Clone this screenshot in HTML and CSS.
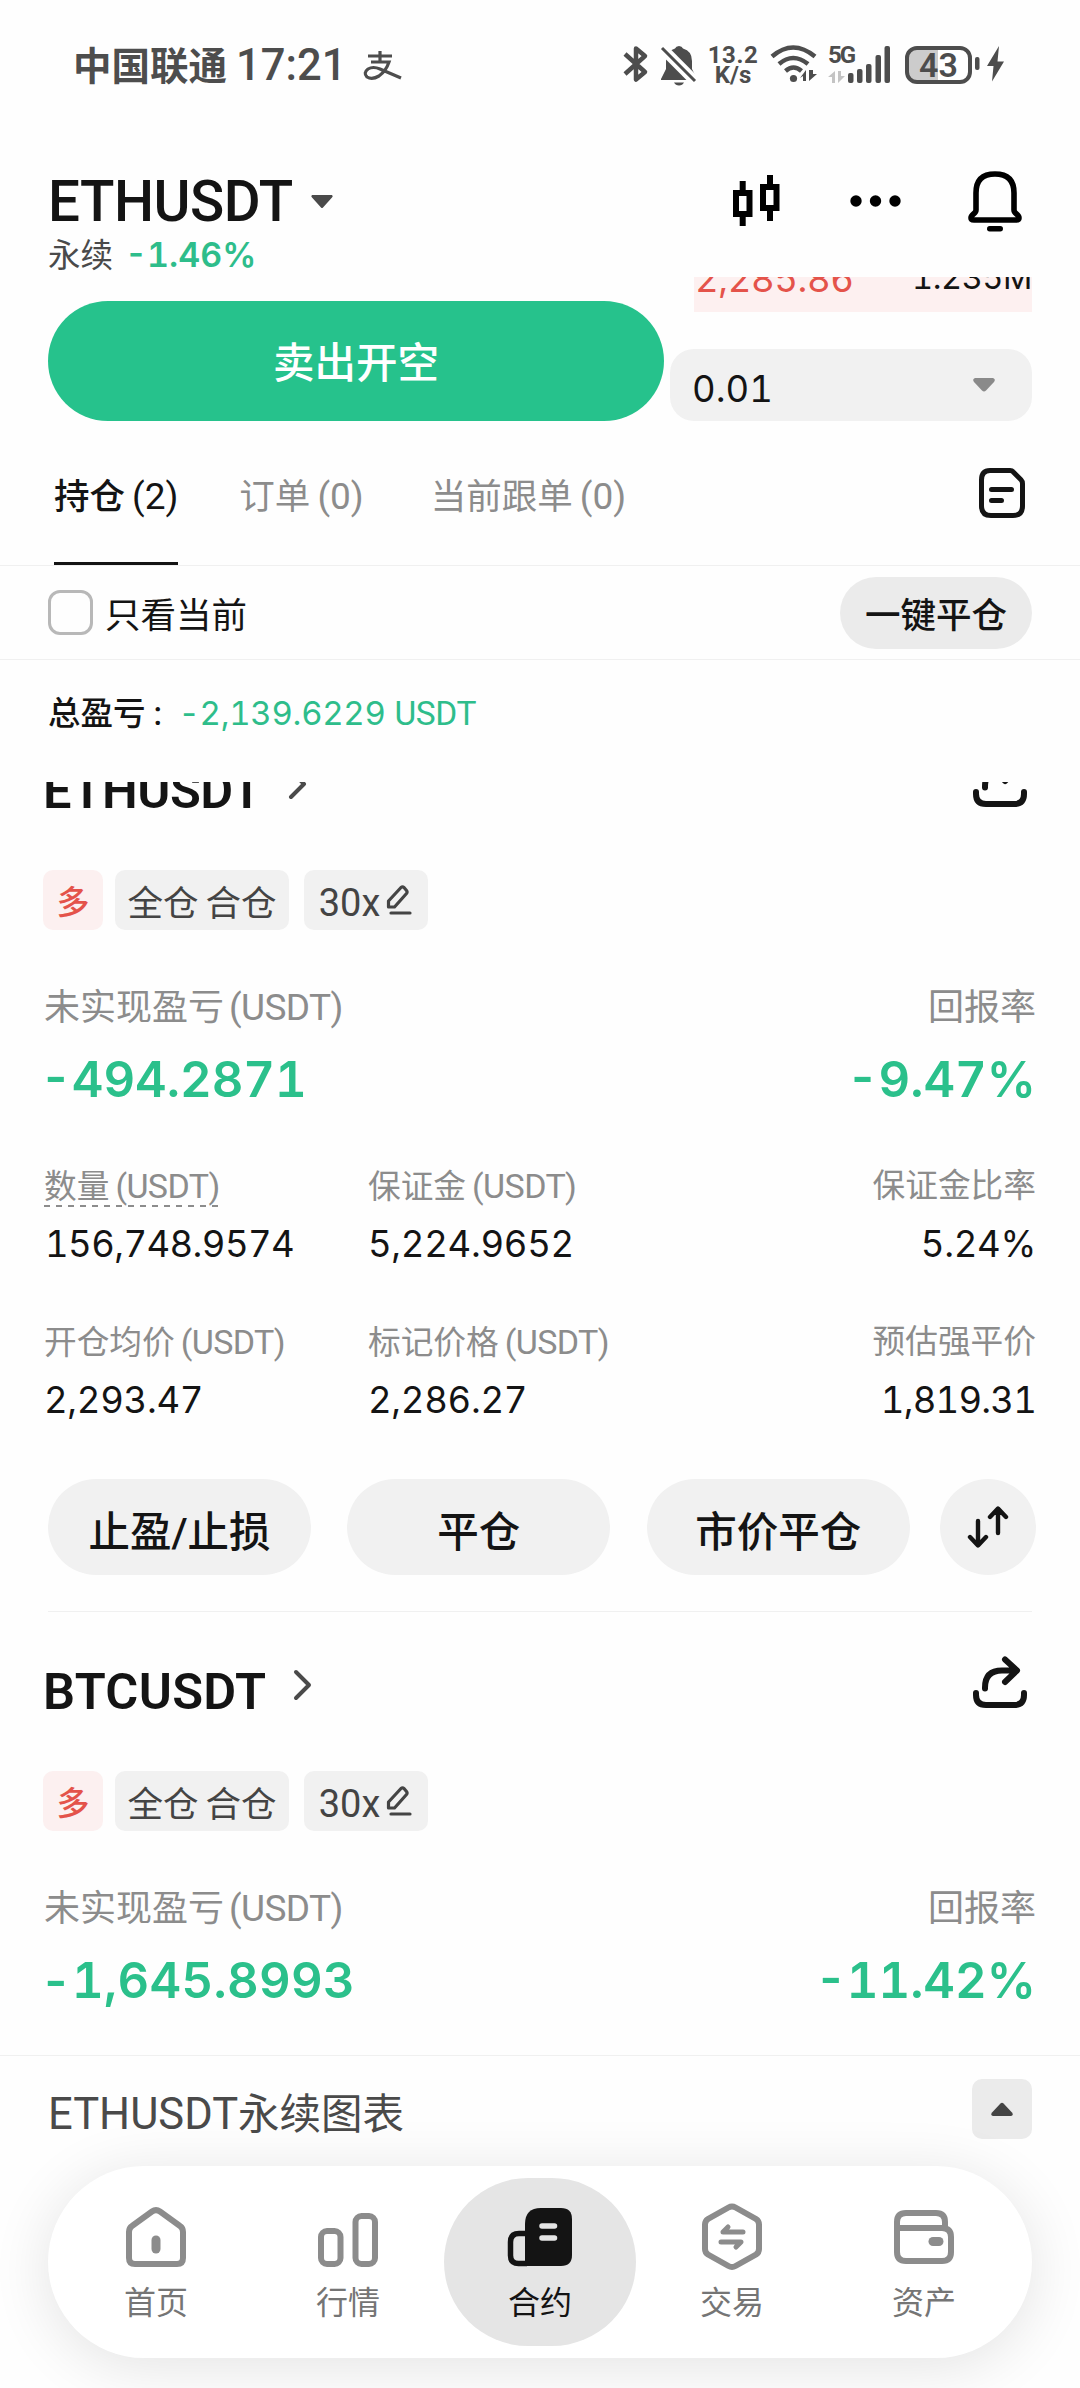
FILE: index.html
```html
<!DOCTYPE html>
<html lang="zh-CN">
<head>
<meta charset="utf-8">
<title>ETHUSDT 永续</title>
<link rel="stylesheet" href="styles.css">
</head>
<body>
<svg class="defs" width="0" height="0">
  <symbol id="share" viewBox="0 0 60 60"><g fill="none" stroke="#141414" stroke-width="6" stroke-linecap="round" stroke-linejoin="round"><path d="M6 41v2q0 10 10 10h28q10 0 10-10v-2"/><path d="M15 36.500v-1q0-17 17-17h14M35 7.500l12 11l-12 11.500"/></g></symbol>
  <symbol id="pencil" viewBox="0 0 28 32"><g fill="none" stroke="#444" stroke-width="3.200" stroke-linejoin="round" stroke-linecap="round"><path d="M3.500 23v-6L16 3.500q1.500-1.200 3 0l2.500 3q1.200 1.500 0 3L9.500 23z"/><path d="M6 29h19"/></g></symbol>
  <symbol id="chevron" viewBox="0 0 20 32"><path d="M3 3l13 13L3 29" fill="none" stroke="#4a4a4a" stroke-width="4" stroke-linecap="round" stroke-linejoin="round"/></symbol>
</svg>

<div class="status">
  <span class="carrier">中国联通</span><span class="clock">17:21</span>
  <svg class="pay" width="40" height="32" viewBox="0 0 40 32"><g fill="none" stroke="#4d4d4d" stroke-width="3.200"><path d="M6 6h24M18 1v11M9 12h18q-3 9-10 14q-7 4-12 1q-4-4 1-8q5-3 12 0l21 9"/></g></svg>
  <div class="sys">
    <svg width="28" height="40" viewBox="0 0 28 40"><path d="M2 10l20 18-9 7.500V4.500l9 7.500L2 30" fill="none" stroke="#4d4d4d" stroke-width="4.500" stroke-linejoin="round"/></svg>
    <svg class="mute" width="38" height="42" viewBox="0 0 38 42"><path d="M19 2q-3 0-4 2.500Q6 7 6 17v8l-5 10v1h36v-1l-5-10v-8q0-10-9-12.500Q22 2 19 2z" fill="#4d4d4d"/><path d="M14 38.500h10q-1.500 3-5 3t-5-3z" fill="#4d4d4d"/><path d="M-1 5l36 36" stroke="#fff" stroke-width="5"/><path d="M3.500 3.500l33 33" stroke="#fff" stroke-width="7.500"/><path d="M2 4l33 33" stroke="#4d4d4d" stroke-width="3"/></svg>
    <div class="rate"><span class="num">13.2</span><span>K/s</span></div>
    <svg class="wifi" width="48" height="40" viewBox="0 0 48 40"><g fill="none" stroke="#4d4d4d" stroke-width="4.500"><path d="M2 12.500q21-18 43 0"/><path d="M9 20q14-12 29 0"/><path d="M15.500 27q8-7 16 0"/></g><circle cx="23.500" cy="34.500" r="3.600" fill="#4d4d4d"/><path d="M30 34l6-8v11h-3v-5zM39 26v11l8-7h-4v-4z" fill="#4d4d4d"/></svg>
    <div class="cell"><span>5G</span>
      <svg width="64" height="40" viewBox="0 0 64 40"><g fill="#4d4d4d"><rect x="20" y="29" width="5.500" height="10" rx="2"/><rect x="29" y="25" width="5.500" height="14" rx="2"/><rect x="38" y="20" width="5.500" height="19" rx="2"/><rect x="47.500" y="11" width="5.500" height="28" rx="2"/><rect x="56.500" y="2" width="5.500" height="37" rx="2"/></g><path d="M0 33l7-6v12h-3v-6zM10 27v12l7-7h-4v-5z" fill="#c4c4c4"/></svg>
    </div>
    <div class="battery"><span>43</span></div>
    <svg class="nub" width="32" height="40" viewBox="0 0 32 40"><rect x="1" y="13" width="4.500" height="13" rx="2" fill="#4d4d4d"/><path d="M25 2L13 22h6.500L18 37.500L30 17.500h-6.500z" fill="#4d4d4d"/></svg>
  </div>
</div>

<header class="top">
  <div>
    <div class="pair">ETHUSDT<svg width="24" height="16" viewBox="0 0 24 16"><path d="M2 1h20q1.500 1 0 2.500L13 13.500q-1 1-2 0L2 3.500Q.5 2 2 1z" fill="#4a4a4a"/></svg></div>
    <div class="sub">永续<b>-1.46%</b></div>
  </div>
  <div class="tools">
    <svg width="50" height="54" viewBox="0 0 50 54"><g fill="none" stroke="#000" stroke-width="6"><path d="M4 19h13.500v21H4zM31 13h13.500v21H31z"/><path d="M10.700 7v11M10.700 41v11M38 1v11M38 35v12"/></g></svg>
    <svg width="54" height="14" viewBox="0 0 54 14"><circle cx="7" cy="7" r="5.700"/><circle cx="26.500" cy="7" r="5.700"/><circle cx="46" cy="7" r="5.700"/></svg>
    <svg class="bell" width="56" height="64" viewBox="0 0 56 64"><path d="M28 5q19 0 19 19v17q0 2 2.500 4t2.500 4t-3 2H7q-3 0-3-2t2.500-4t2.500-4V24Q9 5 28 5z" fill="none" stroke="#000" stroke-width="5.600"/><rect x="20" y="57" width="16" height="5.500" rx="2.700"/></svg>
  </div>
</header>

<section class="trade">
  <button class="sell">卖出开空</button>
  <div class="book">
    <div class="ask"><span>2,285.86</span><span class="vol">1.235M</span></div>
    <div class="step"><span>0.01</span><svg width="24" height="16" viewBox="0 0 24 16"><path d="M3 1h18q3 1 1 4l-8 8.500q-2 2-4 0L2 5Q0 2 3 1z" fill="#8a8a8a"/></svg></div>
  </div>
</section>

<nav class="tabs">
  <div class="tab on">持仓<i>(2)</i></div>
  <div class="tab">订单<i>(0)</i></div>
  <div class="tab">当前跟单<i>(0)</i></div>
  <svg class="doc" width="48" height="52" viewBox="0 0 48 52"><path d="M12 3.500h20q2 0 3 1.200l8 8q1.500 1.500 1.500 4V39q0 9.500-9.500 9.500H13q-9.500 0-9.500-9.500V13q0-9.500 8.500-9.500z" fill="none" stroke="#141414" stroke-width="5" stroke-linejoin="round"/><path d="M13.500 22.500h20M13.500 33.500h10" stroke="#141414" stroke-width="5" stroke-linecap="round"/></svg>
</nav>

<div class="filter"><span class="check"></span><span class="only">只看当前</span><button class="closeall">一键平仓</button></div>

<div class="total"><span>总盈亏</span><span class="colon">:</span><b>-2,139.6229</b><em>USDT</em></div>

<main class="list">
  <article class="pos first">
    <div class="head"><h2 class="eth">ETHUSDT</h2><svg width="20" height="32"><use href="#chevron"/></svg><svg class="sh" width="60" height="60"><use href="#share"/></svg></div>
    <div class="tags"><span class="tag long">多</span><span class="tag mode">全仓<i>合仓</i></span><span class="tag lev">30x<svg width="28" height="32"><use href="#pencil"/></svg></span></div>
    <div class="row lab big"><span>未实现盈亏<i>(USDT)</i></span><span>回报率</span></div>
    <div class="row pnl"><span>-494.2871</span><span>-9.47%</span></div>
    <div class="grid">
      <div><p class="lab"><u>数量<i>(USDT)</i></u></p><p class="val one">156,748.9574</p></div>
      <div><p class="lab">保证金<i>(USDT)</i></p><p class="val">5,224.9652</p></div>
      <div class="r"><p class="lab">保证金比率</p><p class="val pct">5.24%</p></div>
      <div><p class="lab">开仓均价<i>(USDT)</i></p><p class="val">2,293.47</p></div>
      <div><p class="lab">标记价格<i>(USDT)</i></p><p class="val">2,286.27</p></div>
      <div class="r"><p class="lab">预估强平价</p><p class="val liq">1,819.31</p></div>
    </div>
    <div class="acts"><button>止盈/止损</button><button>平仓</button><button>市价平仓</button>
      <button class="round"><svg width="44" height="44" viewBox="0 0 44 44"><g fill="none" stroke="#141414" stroke-width="4.400" stroke-linecap="round" stroke-linejoin="round"><path d="M12 16v24M4 32l8 8.500l8-8.500M32 28V4M24 12l8-8.500l8 8.500"/></g></svg></button></div>
  </article>
  <article class="pos">
    <div class="head"><h2>BTCUSDT</h2><svg width="20" height="32"><use href="#chevron"/></svg><svg class="sh" width="60" height="60"><use href="#share"/></svg></div>
    <div class="tags"><span class="tag long">多</span><span class="tag mode">全仓<i>合仓</i></span><span class="tag lev">30x<svg width="28" height="32"><use href="#pencil"/></svg></span></div>
    <div class="row lab big"><span>未实现盈亏<i>(USDT)</i></span><span>回报率</span></div>
    <div class="row pnl wide"><span>-1,645.8993</span><span>-11.42%</span></div>
  </article>
</main>

<div class="chart"><span><i>ETHUSDT</i>永续图表</span><button><svg width="24" height="16" viewBox="0 0 24 16"><path d="M3 15h18q3-1 1-3.500l-8.500-9q-1.500-1.500-3 0L2 11.500Q0 14 3 15z" fill="#444"/></svg></button></div>

<nav class="dock">
  <a><svg width="72" height="72" viewBox="0 0 72 72"><path d="M9 31q0-4 3-6L32 10.500q4-2.800 8 0L60 25q3 2 3 6v26q0 6-6 6H15q-6 0-6-6z" fill="none" stroke="#8c8c8c" stroke-width="6"/><rect x="31.500" y="34.500" width="9" height="18" rx="4.500" fill="#8c8c8c"/></svg>首页</a>
  <a><svg width="72" height="72" viewBox="0 0 72 72"><g fill="none" stroke="#8c8c8c" stroke-width="6"><rect x="9" y="30" width="19.500" height="33" rx="6"/><rect x="43.500" y="15" width="19.500" height="48" rx="6"/></g></svg>行情</a>
  <a class="on"><svg width="72" height="72" viewBox="0 0 72 72"><path d="M21 23Q21 7 37 7h20q11 0 11 11v36q0 11-11 11H21z" fill="#141414"/><path d="M23 32.500h-8q-8.500 0-8.500 8.500v13.500q0 8 8 8H23" fill="none" stroke="#141414" stroke-width="5.500"/><path d="M38 25h12.500M38 37h12.500" stroke="#e5e5e5" stroke-width="5.500" stroke-linecap="round"/></svg>合约</a>
  <a><svg width="72" height="72" viewBox="0 0 72 72"><path d="M32.500 6.500q3.500-2 7 0L60 18q3 2 3 5.500v24.500q0 3.500-3 5.500L39.500 65q-3.500 2-7 0L12 53.500q-3-2-3-5.500V23.500q0-3.500 3-5.500z" fill="none" stroke="#8c8c8c" stroke-width="6"/><path d="M47 31H27l5-5M25 41h20l-5 5" fill="none" stroke="#8c8c8c" stroke-width="5" stroke-linecap="round" stroke-linejoin="round"/></svg>交易</a>
  <a><svg width="72" height="72" viewBox="0 0 72 72"><g fill="none" stroke="#8c8c8c" stroke-width="6"><path d="M57 27v-6q0-9-9-9H18q-9 0-9 9v30q0 9 9 9h36q9 0 9-9V36q0-9-9-9H9"/></g><rect x="40.500" y="36" width="15" height="9" rx="4.500" fill="#8c8c8c"/></svg>资产</a>
</nav>
</body>
</html>
```
FILE: styles.css
```css
* { box-sizing: border-box; margin: 0; padding: 0; }
body {
  width: 1080px; height: 2388px; overflow: hidden;
  display: flex; flex-direction: column;
  background: #fefefe; color: #141414;
  font-family: Roboto, "Noto Sans CJK SC", sans-serif;
}
i, em { font-style: normal; }
svg { display: block; flex: none; }
button { border: 0; font: inherit; color: inherit; display: flex; align-items: center; justify-content: center; }
.defs { position: absolute; }

.status { height: 130px; padding: 44px 74px 0 73px; display: flex; align-items: flex-start; color: #4d4d4d; }
.carrier { font-size: 38.500px; font-weight: 600; line-height: 44px; width: 163px; padding-top: 1px; }
.clock { font-size: 43.500px; font-weight: 500; line-height: 44px; width: 126px; }
.pay { margin-top: 6px; }
.sys { display: flex; margin-left: 221px; }
.mute { margin-left: 9px; }
.rate { display: flex; flex-direction: column; align-items: center; margin-left: 11px; width: 48px; font-size: 24px; font-weight: 700; line-height: 20px; padding-top: 1px; }
.rate .num { letter-spacing: .6px; }
.wifi { margin-left: 13px; }
.cell { position: relative; width: 64px; margin-left: 10px; }
.cell span { position: absolute; left: 0; top: 1px; font-size: 24px; line-height: 20px; font-weight: 700; letter-spacing: -2px; }
.battery { width: 67px; height: 38px; margin: 2px 0 0 13px; border: 4px solid #4d4d4d; border-radius: 12px; background: linear-gradient(90deg, #ccc 49%, #fff 49%); display: flex; align-items: center; justify-content: center; }
.battery span { font-size: 34px; font-weight: 600; line-height: 34px; }
.nub { margin-left: 2px; }

.top { height: 147px; padding: 42px 57px 0 48px; display: flex; justify-content: space-between; }
.pair { font-size: 56.500px; font-weight: 500; line-height: 60px; letter-spacing: -.5px; display: flex; align-items: center; gap: 17px; }
.sub { font-size: 32.500px; line-height: 40px; color: #4a4a4a; margin-top: 3px; display: flex; align-items: baseline; gap: 12px; }
.sub b { font: 600 34px/40px Inter, sans-serif; font-feature-settings: "tnum"; color: #2ebd8b; }
.tools { display: flex; align-items: center; height: 58px; gap: 67px; }
.bell { margin-left: -3px; }

.trade { height: 144px; padding-left: 48px; display: flex; }
.sell { width: 616px; height: 120px; margin-top: 24px; border-radius: 60px; background: #26c28c; color: #fff; font-size: 41.500px; font-weight: 500; padding-bottom: 2px; }
.book { margin-left: 6px; width: 362px; }
.ask { margin-left: 24px; height: 35px; overflow: hidden; background: #fdf0f0; display: flex; justify-content: space-between; align-items: flex-start; }
.ask span { font: 400 36.500px/44px Inter, sans-serif; font-feature-settings: "tnum"; letter-spacing: -.4px; color: #e4534a; margin: -20px 0 0 1px; }
.ask .vol { color: #141414; font-size: 32.500px; margin-top: -21px; }
.step { margin-top: 37px; height: 72px; border-radius: 24px; background: #f1f1f1; display: flex; align-items: center; justify-content: space-between; padding: 7px 36px 0 22px; font: 400 36.500px/44px Inter, sans-serif; font-feature-settings: "tnum"; }
.step svg { margin-top: -7px; }

.tabs { height: 145px; border-bottom: 1px solid #f0f0f0; padding: 0 54px; display: flex; }
.tab { height: 144px; padding-top: 54px; font-size: 35.500px; line-height: 44px; color: #8c8c8c; font-weight: 400; margin-right: 61px; }
.tab i { margin-left: 7px; font-size: 37px; font-weight: 400; }
.tab + .tab + .tab { margin-left: 6px; }
.on.tab { color: #141414; font-weight: 500; border-bottom: 3px solid #141414; }
.doc { margin: 46px 0 0 auto; }

.filter { height: 94px; border-bottom: 1px solid #f0f0f0; padding: 0 48px; display: flex; align-items: center; font-size: 35.500px; line-height: 44px; }
.check { width: 45px; height: 45px; border: 3px solid #b8b8b8; border-radius: 12px; margin-right: 12px; }
.only { padding-top: 6px; }
.closeall { margin-left: auto; width: 192px; height: 72px; border-radius: 36px; background: #ebebeb; font-weight: 500; padding-top: 6px; }

.total { height: 122px; padding: 31px 48px 0; display: flex; align-items: baseline; font-size: 32.500px; line-height: 44px; font-weight: 500; }
.colon { width: 33px; padding-left: 8px; }
.total b { font: 400 33px/44px Inter, sans-serif; font-feature-settings: "tnum"; letter-spacing: -.3px; color: #2ebd8b; }
.total em { color: #2ebd8b; font-size: 33.500px; font-weight: 400; margin-left: 9px; letter-spacing: -.4px; }

.list { height: 1273px; overflow: hidden; }
.pos { padding: 50px 44px 36px; height: 901px; position: relative; }
.first { margin-top: -71px; }
.acts::after { content: ""; position: absolute; left: 48px; right: 48px; bottom: 0; height: 1px; background: #f0f0f0; }
.head { display: flex; height: 60px; }
.head h2 { font-size: 50.500px; font-weight: 600; line-height: 60px; width: 250px; white-space: nowrap; letter-spacing: .3px; margin-left: -1px; }
.head .eth { width: 245px; letter-spacing: -.5px; }
.head svg { margin-top: 7px; }
.head .sh { margin: -10px 6px 0 auto; }
.tags { display: flex; margin-top: 49px; height: 60px; }
.tag { height: 60px; border-radius: 10px; background: #f1f1f1; color: #444; font-size: 35.500px; line-height: 68px; display: flex; justify-content: center; }
.long { width: 60px; margin-left: -1px; margin-right: 12px; background: #fcf0f0; color: #e4534a; font-size: 33px; line-height: 66px; font-weight: 500; }
.mode { width: 174px; margin-right: 15px; }
.mode i { margin-left: 7px; }
.lev { width: 124px; font-size: 38px; line-height: 67px; gap: 5px; }
.lev svg { margin-top: 14px; }
.row { display: flex; justify-content: space-between; }
.lab { color: #8c8c8c; font-size: 32.700px; line-height: 40px; }
.lab i { margin-left: 6px; font-size: 34px; letter-spacing: -.6px; font-weight: 400; }
.big { font-size: 36px; line-height: 44px; margin-top: 56px; }
.big i { font-size: 37px; margin-left: 5px; }
.pnl { font: 600 49px/56px Inter, sans-serif; font-feature-settings: "tnum"; color: #2bc08b; margin: 22px 0 -1px -4px; }
.wide span:first-child { letter-spacing: .3px; }
.grid { display: grid; grid-template-columns: 324px 400px 1fr; row-gap: 57px; margin-top: 59px; }
.grid u { text-decoration: none; display: block; width: 174px; height: 41px; background: repeating-linear-gradient(90deg, #8c8c8c 0 6px, transparent 6px 12px) 0 39px / 100% 2px no-repeat; }
.grid .lab { height: 40px; white-space: nowrap; }
.grid .val { font: 400 36.500px/44px Inter, sans-serif; font-feature-settings: "tnum"; letter-spacing: -.3px; margin-top: 16px; margin-bottom: -1px; }
.grid .one { letter-spacing: -.6px; padding-left: 1px; }
.grid .pct { letter-spacing: -.3px; }
.grid .liq { letter-spacing: -.8px; }
.r { text-align: right; }
.acts { display: flex; margin: 58px 0 0 4px; height: 96px; justify-content: space-between; }
.acts button { width: 263px; height: 96px; border-radius: 48px; background: #f1f1f1; font-size: 41.500px; font-weight: 500; padding-top: 4px; }
.acts .round { width: 96px; margin-left: -6px; padding: 0; }

.chart { height: 111px; border-top: 1px solid #f0f0f0; display: flex; justify-content: space-between; padding: 23px 48px 0; color: #4a4a4a; }
.chart span { font-size: 41.500px; line-height: 48px; margin-top: 12px; }
.chart i { font-size: 43.500px; }
.chart button { width: 60px; height: 60px; border-radius: 10px; background: #ebebeb; }
.dock { margin: 0 48px; height: 192px; padding: 12px; border-radius: 96px; background: #fff; box-shadow: 0 8px 60px rgba(0,0,0,.11); display: flex; justify-content: center; }
.dock a { width: 192px; flex: none; height: 168px; border-radius: 84px; padding-top: 23px; display: flex; flex-direction: column; align-items: center; font-size: 32px; line-height: 40px; gap: 10px; color: #757575; }
.dock .on { background: #e5e5e5; color: #141414; }
```
